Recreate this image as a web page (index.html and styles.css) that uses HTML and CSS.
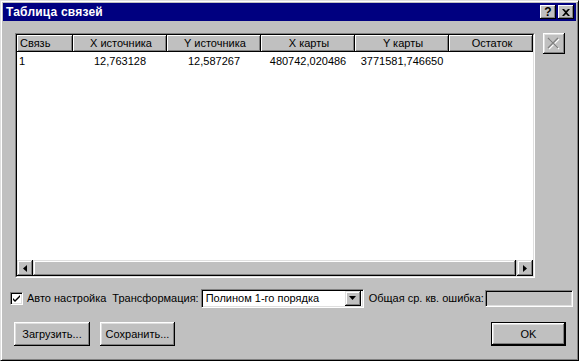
FILE: index.html
```html
<!DOCTYPE html>
<html lang="ru">
<head>
  <meta charset="UTF-8" />
  <title>Таблица связей</title>
  <link rel="stylesheet" href="styles.css">
</head>
<body>
  <div class="window">
    <div class="title-bar">
      <span class="title">Таблица связей</span>
      <div class="title-btns">
        <button class="tbtn help">?</button>
        <button class="tbtn close">
          <svg width="8" height="7" viewBox="0 0 8 7"><path d="M0 0h2l2 2 2-2h2L5 3.5 8 7H6L4 5 2 7H0l3-3.5z" fill="#000"/></svg>
        </button>
      </div>
    </div>

    <div class="top-row">
      <div class="list">
        <div class="list-inner">
          <div class="list-head">
            <div class="hcell c1">Связь</div>
            <div class="hcell c2">X источника</div>
            <div class="hcell c2">Y источника</div>
            <div class="hcell c2">X карты</div>
            <div class="hcell c2">Y карты</div>
            <div class="hcell c3">Остаток</div>
          </div>
          <div class="list-row">
            <div class="cell c1 left">1</div>
            <div class="cell c2">12,763128</div>
            <div class="cell c2">12,587267</div>
            <div class="cell c2">480742,020486</div>
            <div class="cell c2">3771581,746650</div>
            <div class="cell c3"></div>
          </div>
          <div class="list-space"></div>
          <div class="hscroll">
            <div class="arrow">
              <svg width="4" height="7" viewBox="0 0 4 7"><path d="M4 0v7L0 3.5z" fill="#000"/></svg>
            </div>
            <div class="thumb"></div>
            <div class="arrow">
              <svg width="4" height="7" viewBox="0 0 4 7"><path d="M0 0v7l4-3.5z" fill="#000"/></svg>
            </div>
          </div>
        </div>
      </div>
      <button class="btn del-btn" disabled>
        <svg width="14" height="13" viewBox="0 0 14 13">
          <path d="M2 2l10 10M12 2L2 12" stroke="#fff" stroke-width="1.4"/>
          <path d="M1 1l10 10M11 1L1 11" stroke="#808080" stroke-width="1.4"/>
        </svg>
      </button>
    </div>

    <div class="opts-row">
      <span class="check">
        <svg width="9" height="9" viewBox="0 0 9 9"><path d="M1 4l2 2 5-5v2L3 8 1 6z" fill="#000"/></svg>
      </span>
      <span class="lbl auto">Авто настройка</span>
      <span class="lbl trans">Трансформация:</span>
      <div class="combo">
        <span class="combo-text">Полином 1-го порядка</span>
        <span class="combo-btn">
          <svg width="7" height="4" viewBox="0 0 7 4"><path d="M0 0h7L3.5 4z" fill="#000"/></svg>
        </span>
      </div>
      <span class="lbl err">Общая ср. кв. ошибка:</span>
      <div class="edit"></div>
    </div>

    <div class="btn-row">
      <button class="btn load">Загрузить...</button>
      <button class="btn save">Сохранить...</button>
      <button class="btn ok">OK</button>
    </div>
  </div>
</body>
</html>
```

FILE: styles.css
```css
body {
  margin: 0;
  padding: 0;
  background-color: #c0c0c0;
  font-family: 'Liberation Sans', Arial, sans-serif;
  font-size: 11px;
  color: #000;
}

.window {
  width: 579px;
  height: 361px;
  box-sizing: border-box;
  padding: 2px;
  background-color: #c0c0c0;
  border: 1px solid;
  border-color: #dfdfdf #000 #000 #dfdfdf;
  box-shadow: inset 1px 1px #fff, inset -1px -1px #808080;
  display: flex;
  flex-direction: column;
}

.title-bar {
  height: 18px;
  background-color: #000080;
  color: #fff;
  display: flex;
  align-items: center;
  padding: 0 2px 0 3px;
}

.title {
  font-weight: bold;
  font-size: 12px;
  letter-spacing: 0.2px;
  flex: 1;
}

.title-btns {
  display: flex;
  gap: 2px;
}

.tbtn {
  width: 16px;
  height: 14px;
  padding: 0;
  margin: 0;
  border: none;
  background-color: #c0c0c0;
  box-shadow: inset -1px -1px #000, inset 1px 1px #fff, inset -2px -2px #808080;
  display: flex;
  align-items: center;
  justify-content: center;
  font-family: 'Liberation Sans', Arial, sans-serif;
  font-weight: bold;
  font-size: 12px;
  color: #000;
}

.top-row {
  display: flex;
  gap: 8px;
  margin: 12px 0 0 12px;
}

.list {
  width: 520px;
  height: 245px;
  box-sizing: border-box;
  border: 1px solid;
  border-color: #808080 #fff #fff #808080;
}

.list-inner {
  height: 100%;
  box-sizing: border-box;
  border: 1px solid;
  border-color: #000 #dfdfdf #dfdfdf #000;
  background-color: #fff;
  display: flex;
  flex-direction: column;
}

.list-head {
  display: flex;
  height: 17px;
}

.hcell {
  box-sizing: border-box;
  height: 17px;
  background-color: #c0c0c0;
  box-shadow: inset -1px -1px #000, inset 1px 1px #fff, inset -2px -2px #808080;
  text-align: center;
  line-height: 16px;
  padding-left: 2px;
}

.c1 { width: 56px; }
.c2 { width: 94px; }
.c3 { flex: 1; }

.list-head .c1 {
  text-align: left;
  padding-left: 3px;
}

.list-row {
  display: flex;
  height: 16px;
  line-height: 16px;
  margin-top: 1px;
}

.cell {
  text-align: center;
}

.cell.left {
  text-align: left;
  padding-left: 2px;
  box-sizing: border-box;
}

.list-space {
  flex: 1;
}

.hscroll {
  height: 16px;
  display: flex;
  background-color: #c0c0c0;
}

.arrow {
  width: 16px;
  height: 16px;
  box-sizing: border-box;
  background-color: #c0c0c0;
  box-shadow: inset -1px -1px #000, inset 1px 1px #dfdfdf, inset -2px -2px #808080, inset 2px 2px #fff;
  display: flex;
  align-items: center;
  justify-content: center;
}

.thumb {
  flex: 1;
  margin-right: 1px;
  background-color: #c0c0c0;
  box-shadow: inset -1px -1px #000, inset 1px 1px #dfdfdf, inset -2px -2px #808080, inset 2px 2px #fff;
}

.btn {
  box-sizing: border-box;
  padding: 0;
  border: none;
  background-color: #c0c0c0;
  box-shadow: inset -1px -1px #000, inset 1px 1px #fff, inset -2px -2px #808080, inset 2px 2px #dfdfdf;
  font-family: 'Liberation Sans', Arial, sans-serif;
  font-size: 11px;
  color: #000;
  display: flex;
  align-items: center;
  justify-content: center;
}

.del-btn {
  width: 22px;
  height: 21px;
}

.opts-row {
  display: flex;
  align-items: center;
  height: 18px;
  margin: 11px 0 0 7px;
}

.check {
  width: 13px;
  height: 13px;
  box-sizing: border-box;
  background-color: #fff;
  border: 1px solid;
  border-color: #808080 #fff #fff #808080;
  box-shadow: inset 1px 1px #000, inset -1px -1px #dfdfdf;
  display: flex;
  align-items: center;
  justify-content: center;
}

.lbl.auto {
  margin-left: 4px;
}

.lbl.trans {
  margin-left: 6px;
}

.combo {
  width: 163px;
  height: 19px;
  margin-left: 2px;
  box-sizing: border-box;
  border: 1px solid;
  border-color: #808080 #fff #fff #808080;
  box-shadow: inset 1px 1px #000, inset -1px -1px #dfdfdf;
  background-color: #fff;
  display: flex;
  align-items: center;
  padding: 2px;
}

.combo-text {
  flex: 1;
  padding-left: 2px;
}

.combo-btn {
  width: 16px;
  height: 15px;
  background-color: #c0c0c0;
  box-shadow: inset -1px -1px #000, inset 1px 1px #dfdfdf, inset -2px -2px #808080, inset 2px 2px #fff;
  display: flex;
  align-items: center;
  justify-content: center;
}

.lbl.err {
  margin-left: 5px;
}

.edit {
  width: 88px;
  height: 17px;
  margin-left: 1px;
  box-sizing: border-box;
  border: 1px solid;
  border-color: #808080 #fff #fff #808080;
  box-shadow: inset 1px 1px #000, inset -1px -1px #dfdfdf;
  background-color: #c0c0c0;
}

.btn-row {
  display: flex;
  margin: 15px 0 0 11px;
  gap: 10px;
}

.btn-row .btn {
  height: 24px;
}

.load { width: 76px; }
.save { width: 75px; }

.ok {
  width: 75px;
  margin-left: auto;
  margin-right: 10px;
  border: 1px solid #000;
}
```
